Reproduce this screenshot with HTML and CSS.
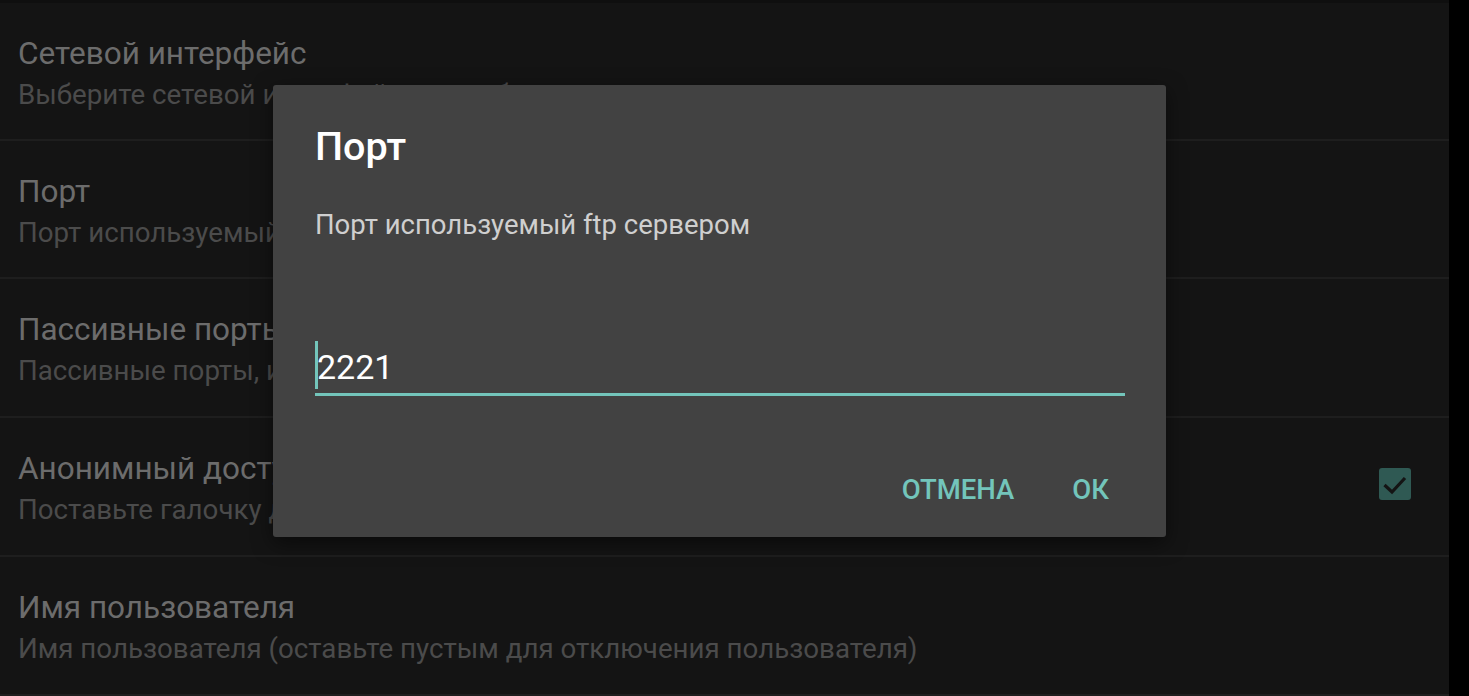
FILE: index.html
```html
<!doctype html>
<html lang="ru">
<head>
	<meta charset="utf-8">
	<title>Настройки FTP</title>
	<link rel="stylesheet" href="styles.css">
</head>
<body>
<div class="screen">
	<div class="prefs">
		<div class="topline"></div>
		<div class="row">
			<div class="text">
				<div class="title">Сетевой интерфейс</div>
				<div class="summary">Выберите сетевой интерфейс для работы сервера</div>
			</div>
		</div>
		<div class="row">
			<div class="text">
				<div class="title">Порт</div>
				<div class="summary">Порт используемый ftp сервером</div>
			</div>
		</div>
		<div class="row">
			<div class="text">
				<div class="title">Пассивные порты</div>
				<div class="summary">Пассивные порты, используемые сервером</div>
			</div>
		</div>
		<div class="row">
			<div class="text">
				<div class="title">Анонимный доступ</div>
				<div class="summary">Поставьте галочку для разрешения анонимного доступа</div>
			</div>
			<div class="check">
				<svg width="32" height="32" viewBox="0 0 32 32">
					<rect x="0" y="0" width="32" height="32" rx="3" fill="#2f5953"/>
					<path d="M5.5 17 L13 24 L26 10" fill="none" stroke="#141414" stroke-width="3.2"/>
				</svg>
			</div>
		</div>
		<div class="row">
			<div class="text">
				<div class="title">Имя пользователя</div>
				<div class="summary">Имя пользователя (оставьте пустым для отключения пользователя)</div>
			</div>
		</div>
	</div>
	<div class="side"></div>

	<div class="dialog">
		<div class="dlg-title">Порт</div>
		<div class="dlg-msg">Порт используемый ftp сервером</div>
		<div class="field">
			<span class="caret"></span><span class="value">2221</span>
		</div>
		<div class="buttons">
			<span class="btn">ОТМЕНА</span>
			<span class="btn">ОК</span>
		</div>
	</div>
</div>
</body>
</html>
```

FILE: styles.css
```css
html,body{margin:0;padding:0;background:#000;}
body{font-family:Roboto,"Noto Sans",sans-serif;}
.screen{width:1469px;height:696px;display:flex;position:relative;overflow:hidden;}
.prefs{width:1449px;background:#141414;}
.side{flex:1;background:#000;}
.topline{height:3px;background:#0f0f0f;}
.row{height:136.75px;border-bottom:2px solid #1e1e1e;display:flex;align-items:flex-start;padding:0 38px 0 18px;box-sizing:content-box;white-space:nowrap;overflow:hidden;}
.row:nth-child(2){height:135.5px;}
.text{flex:1;padding-top:32px;}
.title{font-size:31.5px;line-height:38px;color:#6c6c6c;}
.summary{font-size:27.7px;line-height:34px;color:#4b4b4b;margin-top:5px;}
.check{width:32px;height:32px;align-self:center;margin-top:-4px;}
.check svg{display:block;}

.dialog{position:absolute;left:273px;top:85px;width:893px;height:452px;background:#424242;border-radius:3px;box-shadow:0 6px 20px rgba(0,0,0,.5);box-sizing:border-box;padding:0 41px 0 42px;display:flex;flex-direction:column;}
.dlg-title{font-size:39.5px;font-weight:500;color:#fff;margin-top:40px;line-height:44px;}
.dlg-msg{font-size:27.5px;color:#cfcfcf;margin-top:40px;line-height:32px;}
.field{margin-top:102px;border-bottom:3px solid #73c5bb;height:50px;display:flex;align-items:center;}
.caret{width:3px;height:48px;background:#73c5bb;align-self:flex-start;margin-top:-2px;}
.value{font-size:34px;color:#fff;margin-left:-1px;margin-top:-3px;}
.buttons{display:flex;justify-content:flex-end;gap:58px;margin-top:78px;padding-right:16px;line-height:32px;}
.btn{font-size:27.5px;font-weight:500;color:#73c5bb;}
```
